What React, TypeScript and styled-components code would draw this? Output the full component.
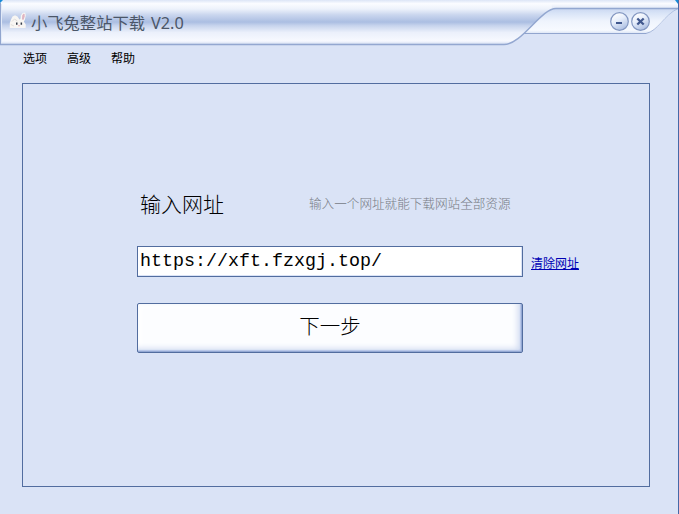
import React, { useState } from "react";
import styled, { createGlobalStyle } from "styled-components";

const sans = `"Noto Sans CJK SC", sans-serif`;

const GlobalStyle = createGlobalStyle`
  * { box-sizing: border-box; }
  html, body { margin: 0; padding: 0; overflow: hidden; background: #dae3f6; }
`;

const Window = styled.div`
  width: 679px;
  height: 514px;
  display: flex;
  flex-direction: column;
  background: #dae3f6;
  border-right: 1px solid #4669a8;
  font-family: ${sans};
  color: #000;
`;

const TitleBar = styled.header`
  position: relative;
  height: 46px;
  flex: none;
  display: flex;
  align-items: flex-start;
  justify-content: space-between;
`;

const Chrome = styled.svg`
  position: absolute;
  left: 0;
  top: 0;
`;

const Brand = styled.div`
  position: relative;
  display: flex;
  align-items: flex-start;
  padding: 10px 0 0 9px;
`;

const Logo = styled.svg`
  margin-top: 2px;
`;

const Title = styled.h1`
  margin: 0 0 0 4px;
  font-size: 16.3px;
  font-weight: 400;
  line-height: 24px;
  color: #4b5668;
  white-space: pre;
`;

const Latin = styled.span`
  font-family: "Noto Sans", sans-serif;
  font-size: 16.3px;
  margin-left: 6px;
`;

const Controls = styled.div`
  position: relative;
  display: flex;
  gap: 1px;
  padding: 12px 27px 0 0;
`;

const RoundButton = styled.button`
  width: 20px;
  height: 20px;
  padding: 0;
  border: 0;
  background: none;
  svg { display: block; }
`;

const Menu = styled.nav`
  display: flex;
  gap: 20px;
  height: 37px;
  flex: none;
  padding: 3px 0 0 23px;
`;

const MenuItem = styled.span`
  font-size: 12px;
  line-height: 18px;
`;

const Panel = styled.main`
  width: 628px;
  height: 404px;
  margin-left: 22px;
  padding: 104px 0 0 114px;
  border: 1px solid #526d9f;
`;

const Heading = styled.div`
  display: flex;
  align-items: center;
  height: 30px;
`;

const Label = styled.label`
  width: 172px;
  padding-left: 3px;
  font-size: 21px;
  font-weight: 300;
  line-height: 30px;
`;

const Hint = styled.span`
  font-size: 12.6px;
  font-weight: 300;
  line-height: 20px;
  color: #777b84;
`;

const Row = styled.div`
  display: flex;
  align-items: center;
  gap: 8px;
  margin-top: 28px;
`;

const UrlInput = styled.input`
  width: 386px;
  height: 31px;
  padding: 0 2px;
  border: 1px solid #526d9f;
  border-radius: 0;
  outline: 0;
  box-shadow: inset -1px -1px #dae3f6;
  background: #fff;
  color: #000;
  font-family: "Liberation Mono", monospace;
  font-size: 18.33px;
`;

const Clear = styled.a`
  padding-top: 2px;
  font-size: 12px;
  line-height: 18px;
  color: #0000b4;
  text-decoration: underline;
  text-underline-offset: 1px;
`;

const NextButton = styled.button`
  display: block;
  width: 386px;
  height: 50px;
  margin-top: 26px;
  padding: 0 0 7px;
  border: 1px solid #526d9f;
  border-radius: 2px;
  background: #fcfdff;
  box-shadow: inset -1px -1px #94a9d4, inset -2px -2px 1px #b5c5e8,
    inset -4px -3px 6px #cdd8f0, inset 3px 3px 5px #fff;
  color: #000;
  font-family: ${sans};
  font-size: 20.5px;
  font-weight: 300;
`;

function Rabbit() {
  return (
    <Logo width="18" height="17" viewBox="0 0 18 17">
      <path
        d="M.8 16V11L2 7.5 3.5 4.5 6 3.2 8.5 4.5 10.5 7.5 11.6 6.5 11.8 3.5 13.5 1 16.2 .6 16.8 3.5 15.8 8 14.8 9.5 16.8 12.5 16.6 16H3z"
        fill="#f8f6f3"
      />
      <path d="M13 7.6 13.2 3.6 14.4 1.8 15.6 2 15.7 4.6 14.6 7.8z" fill="#dfb5c2" />
      <path d="M3 9.5 5.5 7 8.3 9M1.8 12.5 5 14" fill="none" stroke="#dedad7" strokeWidth=".9" />
      <path d="M7 10.5h1.5v2.3H7zM11.6 10.5h1.5v2.3h-1.5z" fill="#343c49" />
      <path d="M9.4 13.2h1.2v1H9.4z" fill="#d88f9a" />
    </Logo>
  );
}

function WindowChrome() {
  return (
    <Chrome width="678" height="46" viewBox="0 0 678 46" aria-hidden="true">
      <defs>
        <linearGradient id="main" x1="0" y1="0" x2="0" y2="45" gradientUnits="userSpaceOnUse">
          <stop offset="0" stopColor="#dce5f6" />
          <stop offset=".08" stopColor="#fbfcff" />
          <stop offset=".2" stopColor="#edf2fb" />
          <stop offset=".33" stopColor="#cad6ee" />
          <stop offset=".49" stopColor="#abbee2" />
          <stop offset=".57" stopColor="#c7d4ed" />
          <stop offset=".72" stopColor="#ebf0fb" />
          <stop offset=".91" stopColor="#f7f9ff" />
          <stop offset="1" stopColor="#cbd7ef" />
        </linearGradient>
        <linearGradient id="strip" x1="0" y1="0" x2="0" y2="8" gradientUnits="userSpaceOnUse">
          <stop offset="0" stopColor="#dce5f6" />
          <stop offset=".45" stopColor="#fbfcff" />
          <stop offset="1" stopColor="#e3eaf8" />
        </linearGradient>
        <linearGradient id="tray" x1="0" y1="8" x2="0" y2="34" gradientUnits="userSpaceOnUse">
          <stop offset="0" stopColor="#c8d6f0" />
          <stop offset=".2" stopColor="#d9e4f7" />
          <stop offset=".5" stopColor="#eff4fd" />
          <stop offset=".85" stopColor="#f7faff" />
          <stop offset="1" stopColor="#d6e0f3" />
        </linearGradient>
        <linearGradient id="trayEdge" x1="640" y1="34" x2="678" y2="8" gradientUnits="userSpaceOnUse">
          <stop offset="0" stopColor="#91a5ce" />
          <stop offset=".5" stopColor="#becbe5" />
          <stop offset="1" stopColor="#a9bce0" />
        </linearGradient>
      </defs>
      <path d="M520 33.5H646C658 31 664 15 678 8.5H550Z" fill="url(#tray)" />
      <path d="M523 33.5H646" fill="none" stroke="#91a5ce" />
      <path d="M646 33.5C658 31 664 15 678 8.5" fill="none" stroke="url(#trayEdge)" />
      <path d="M0 0H678V8.5H556C541 8.5 522 44.5 504 44.5H0Z" fill="url(#main)" />
      <path d="M551 0H678V8.5H552Z" fill="url(#strip)" />
      <path d="M678 8.5H556C541 8.5 522 44.5 504 44.5H0" fill="none" stroke="#93a7d0" strokeWidth="1.4" />
      <path d="M.5 3V45" stroke="#91a5ce" />
      <path d="M1.5 4V43" stroke="#e2eaf8" />
      <path d="M0 0H3L0 3ZM675 0H678V4Z" fill="#168bd8" />
    </Chrome>
  );
}

function ControlIcon({ kind }: { kind: "minimize" | "close" }) {
  return (
    <svg width="20" height="20" viewBox="0 0 20 20">
      <defs>
        <linearGradient id={kind} x1=".2" y1=".05" x2=".7" y2="1">
          <stop offset="0" stopColor="#fff" />
          <stop offset=".4" stopColor="#e8effb" />
          <stop offset="1" stopColor="#a9bce1" />
        </linearGradient>
      </defs>
      <circle cx="9.5" cy="9.5" r="8.8" fill={`url(#${kind})`} stroke="#8397c1" strokeWidth="1.2" />
      <path
        d={kind === "minimize" ? "M6 11H12" : "M6.3 6.5 12.7 12.5M12.7 6.5 6.3 12.5"}
        stroke="#41588e"
        strokeWidth={kind === "minimize" ? 2 : 2.3}
      />
    </svg>
  );
}

export default function App() {
  const [url, setUrl] = useState("https://xft.fzxgj.top/");
  return (
    <>
      <GlobalStyle />
      <Window>
        <TitleBar>
          <WindowChrome />
          <Brand>
            <Rabbit />
            <Title>小飞兔整站下载<Latin>V2.0</Latin></Title>
          </Brand>
          <Controls>
            <RoundButton aria-label="最小化"><ControlIcon kind="minimize" /></RoundButton>
            <RoundButton aria-label="关闭"><ControlIcon kind="close" /></RoundButton>
          </Controls>
        </TitleBar>
        <Menu>
          <MenuItem>选项</MenuItem>
          <MenuItem>高级</MenuItem>
          <MenuItem>帮助</MenuItem>
        </Menu>
        <Panel>
          <Heading>
            <Label htmlFor="url">输入网址</Label>
            <Hint>输入一个网址就能下载网站全部资源</Hint>
          </Heading>
          <Row>
            <UrlInput id="url" value={url} spellCheck={false} onChange={(e) => setUrl(e.target.value)} />
            <Clear onClick={() => setUrl("")}>清除网址</Clear>
          </Row>
          <NextButton>下一步</NextButton>
        </Panel>
      </Window>
    </>
  );
}
